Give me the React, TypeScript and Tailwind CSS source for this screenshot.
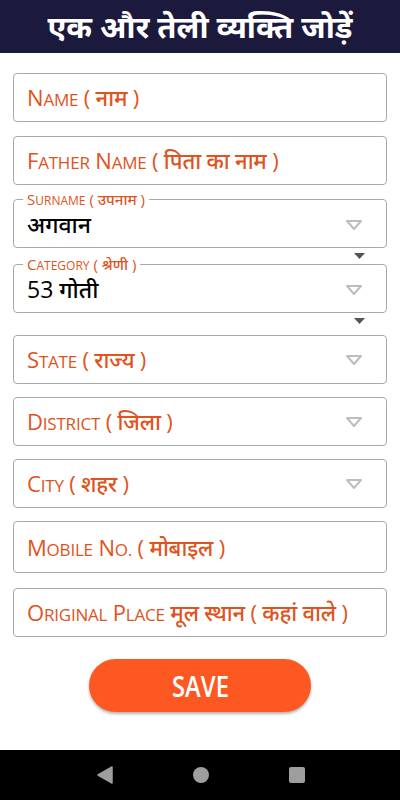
import React from "react";

const Tri = () => (
  <svg width="18" height="12" viewBox="0 0 18 12" className="shrink-0">
    <path d="M2 2 L16 2 L9 10 Z" fill="none" stroke="#bdbdbd" strokeWidth="2" strokeLinejoin="round" />
  </svg>
);

const SmallTri = () => (
  <div className="flex justify-end pr-[22px] h-[16px] items-center">
    <svg width="11" height="6" viewBox="0 0 11 6">
      <path d="M0 0 L11 0 L5.5 6 Z" fill="#555" />
    </svg>
  </div>
);

const font = { fontFamily: "'Open Sans','Noto Sans','Noto Sans Devanagari','Lohit Devanagari',sans-serif" };

function SC({ text, small }: { text: string; small: string }) {
  // render latin words as pseudo small caps: first letter full size, rest uppercase smaller
  const parts = text.split(/(\s+)/);
  return (
    <>
      {parts.map((p, i) => {
        if (/^[A-Za-z][A-Za-z.]*$/.test(p)) {
          return (
            <React.Fragment key={i}>
              {p[0]}
              <span className={small}>{p.slice(1).toUpperCase()}</span>
            </React.Fragment>
          );
        }
        return <React.Fragment key={i}>{p}</React.Fragment>;
      })}
    </>
  );
}

function Field({ text, h = 49, arrow = false }: { text: string; h?: number; arrow?: boolean }) {
  return (
    <div
      className="border border-[#a9a9a9] rounded-[4px] flex items-center justify-between pl-[13px] pr-[23px]"
      style={{ height: h }}
    >
      <span className="text-[#e0531c] text-[22px] font-medium tracking-[-0.2px]">
        <SC text={text} small="text-[17px]" />
      </span>
      {arrow && <Tri />}
    </div>
  );
}

function Outlined({ lab, value }: { lab: string; value: string }) {
  return (
    <div className="relative border border-[#a9a9a9] rounded-[4px] h-[49px] flex items-center justify-between pl-[13px] pr-[23px] pt-[2px]">
      <span className="absolute left-[9px] top-[-10px] bg-white px-[4px] text-[15px] leading-[18px] font-medium text-[#e0531c]">
        <SC text={lab} small="text-[12px]" />
      </span>
      <span className="text-[23px] font-medium text-black">{value}</span>
      <Tri />
    </div>
  );
}

export default function App() {
  return (
    <div className="w-[400px] h-[800px] bg-white flex flex-col" style={font}>
      <div className="h-[53px] bg-[#1c1a3c] flex items-center justify-center shrink-0">
        <span className="text-white text-[31px] font-bold">एक और तेली व्यक्ति जोड़ें</span>
      </div>
      <div className="flex-1 flex flex-col px-[13px] pt-[20px]">
        <Field text="Name ( नाम )" />
        <div className="h-[14px]" />
        <Field text="Father Name ( पिता का नाम )" />
        <div className="h-[14px]" />
        <Outlined lab="Surname ( उपनाम )" value="अगवान" />
        <SmallTri />
        <Outlined lab="Category ( श्रेणी )" value="53 गोती" />
        <SmallTri />
        <div className="h-[6px]" />
        <Field text="State ( राज्य )" arrow />
        <div className="h-[13px]" />
        <Field text="District ( जिला )" arrow />
        <div className="h-[13px]" />
        <Field text="City ( शहर )" arrow />
        <div className="h-[13px]" />
        <Field text="Mobile No. ( मोबाइल )" h={52} />
        <div className="h-[15px]" />
        <Field text="Original Place मूल स्थान ( कहां वाले )" h={49} />
        <div className="flex justify-center pt-[22px]">
          <button className="w-[222px] h-[53px] rounded-full bg-[#fd5722] text-white text-[28px] font-semibold shadow-[0_2px_3px_rgba(0,0,0,0.3)] flex items-center justify-center">
            <span className="inline-block scale-x-[0.85]">SAVE</span>
          </button>
        </div>
      </div>
      <div className="h-[50px] bg-black flex items-center justify-center shrink-0">
        <div className="flex items-center gap-[80px] pl-[2px]">
          <svg width="16" height="18" viewBox="0 0 16 18">
            <path d="M15 1 L15 17 L1 9 Z" fill="#9e9e9e" stroke="#9e9e9e" strokeWidth="1.5" strokeLinejoin="round" />
          </svg>
          <div className="w-[16px] h-[16px] rounded-full bg-[#9e9e9e]" />
          <div className="w-[16px] h-[16px] rounded-[2px] bg-[#9e9e9e]" />
        </div>
      </div>
    </div>
  );
}
